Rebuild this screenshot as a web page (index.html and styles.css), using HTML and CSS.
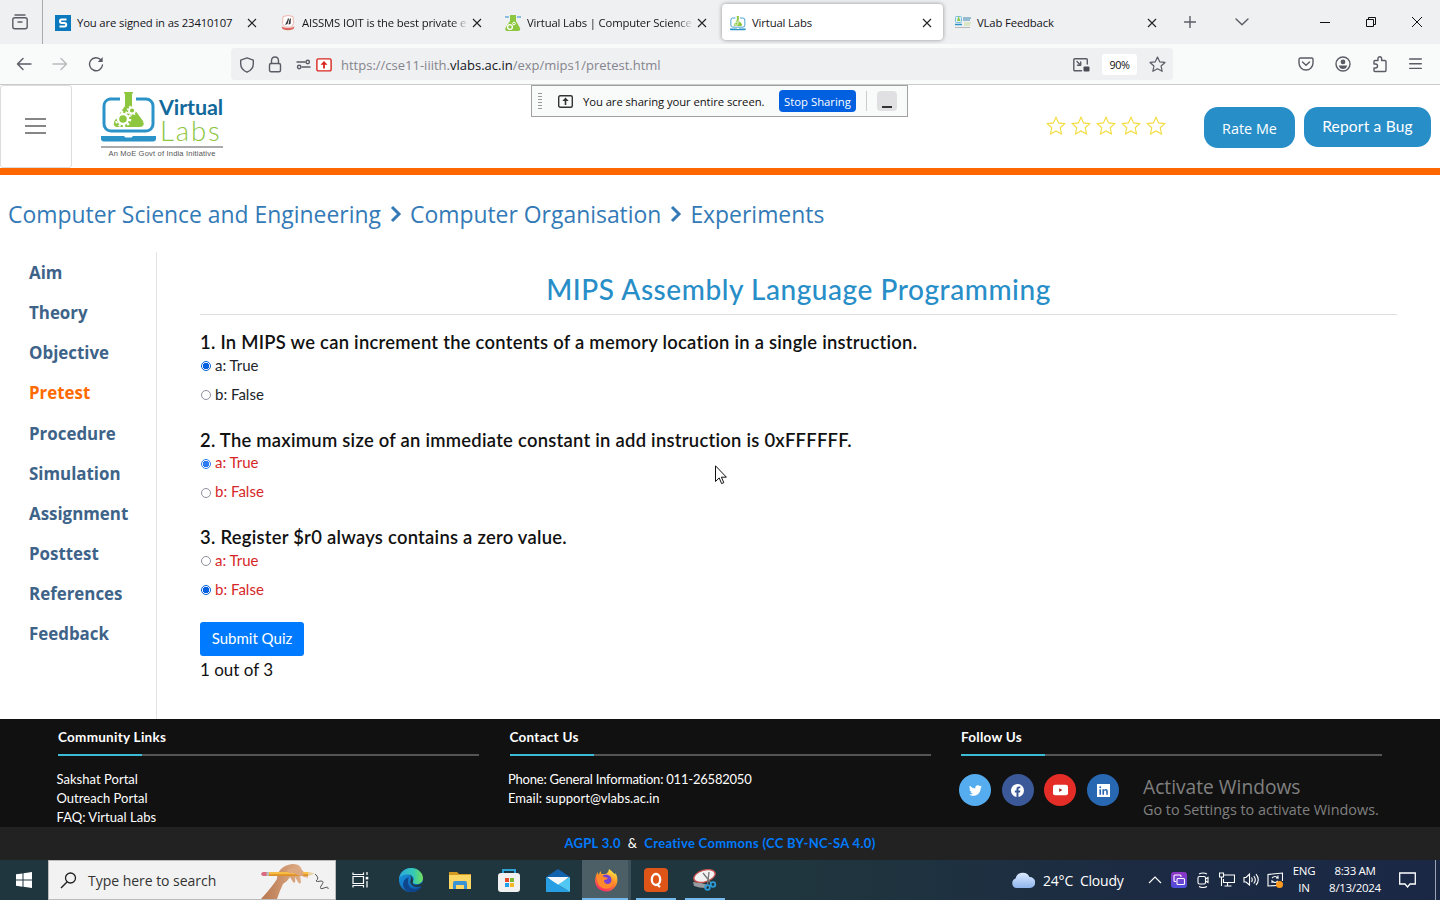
FILE: index.html
```html
<!DOCTYPE html>
<html lang="en">
<head>
<meta charset="utf-8">
<title>Virtual Labs</title>
<link rel="stylesheet" href="styles.css">
</head>
<body>
<svg class="defs" width="0" height="0">
  <defs>
    <linearGradient id="edgeBlue" x1="0" y1="0" x2="1" y2="1"><stop offset="0" stop-color="#1b9de2"/><stop offset="1" stop-color="#0c4fa5"/></linearGradient>
    <linearGradient id="edgeGreen" x1="0" y1="0" x2="1" y2="0"><stop offset="0" stop-color="#2ba9df"/><stop offset=".6" stop-color="#35c8b5"/><stop offset="1" stop-color="#72e05a"/></linearGradient>
    <linearGradient id="fox" x1=".8" y1="0" x2=".3" y2="1"><stop offset="0" stop-color="#fff04a"/><stop offset=".45" stop-color="#ff9125"/><stop offset="1" stop-color="#f5286a"/></linearGradient>
    <linearGradient id="violet" x1="0" y1="0" x2="0" y2="1"><stop offset="0" stop-color="#9334c6"/><stop offset="1" stop-color="#4c50dc"/></linearGradient>
    <linearGradient id="cloud" x1="0" y1="0" x2="0" y2="1"><stop offset="0" stop-color="#dcebff"/><stop offset="1" stop-color="#8fb4ec"/></linearGradient>
    <linearGradient id="skin" x1="0" y1="0" x2="1" y2="0"><stop offset="0" stop-color="#b87850"/><stop offset="1" stop-color="#e5b690"/></linearGradient>
    <symbol id="x" viewBox="0 0 10 10"><path d="M1 1l8 8M9 1l-8 8"/></symbol>
    <symbol id="star" viewBox="0 0 20 20"><path d="M10 1.200l2.600 5.700 6.200.7-4.600 4.200 1.300 6.200-5.500-3.100L4.500 18l1.300-6.200L1.200 7.600l6.200-.7z"/></symbol>
    <symbol id="vlab" viewBox="0 0 56 51">
      <path d="M19 8H9a7 7 0 0 0-6 7v18a7 7 0 0 0 7 7h35a7 7 0 0 0 7-7V15a7 7 0 0 0-7-7H35" fill="none" stroke="#2b93c8" stroke-width="3"/>
      <path d="M0 45h23l1.500 1.500h6L32 45h23v2.500a3 3 0 0 1-3 3H3a3 3 0 0 1-3-3z" fill="#2b93c8"/>
      <path d="M23 1h9v1.500h-1V15l11 15q2.500 6-4 6H17q-6 0-3.500-6L24 15V2.500h-1z" fill="#8dc63f"/>
      <circle cx="22" cy="28" r="5" fill="none" stroke="#fff" stroke-width="2.400"/>
      <circle cx="22" cy="28" r="7.200" fill="none" stroke="#fff" stroke-width="2.200" stroke-dasharray="2.260 2.260"/>
      <circle cx="31" cy="19.500" r="3" fill="none" stroke="#fff" stroke-width="1.800"/>
      <circle cx="31" cy="19.500" r="4.500" fill="none" stroke="#fff" stroke-width="1.400" stroke-dasharray="1.570 1.960"/>
    </symbol>
  </defs>
</svg>

<header class="tabs">
  <div class="view"><svg width="18" height="18" viewBox="0 0 18 18" class="ico"><path d="M4 2h10"/><rect x="1.800" y="4.800" width="14.400" height="11" rx="2"/><path d="M7 9h4"/></svg></div>
  <div class="tab"><svg class="fav" viewBox="0 0 16 16"><rect width="16" height="16" fill="#0a78bd"/><path d="M11.500 4.600H6.500q-1.500 0-1.500 1.700T6.500 8h3q1.700 0 1.700 1.700t-1.700 1.700h-5" fill="none" stroke="#fff" stroke-width="2"/></svg><span class="label">You are signed in as 23410107</span><svg class="close"><use href="#x"/></svg></div>
  <div class="tab"><svg class="fav" viewBox="0 0 16 16"><path d="M3 1.500L8 .500l5 1 .5 7-2 3.500h-7l-2-3.500z" fill="#fff" stroke="#f0b5b0"/><path d="M5 10l2.500-5 .5-2 1 1-1.500 5zM8.500 9.500l1-5 1.500-1.500-.5 6z" fill="#333"/><path d="M1.500 11.500q6.500 3 13 0l-1 2.500q-5.500 2.500-11 0z" fill="#df6761"/></svg><span class="label fade">AISSMS IOIT is the best private e</span><svg class="close"><use href="#x"/></svg></div>
  <div class="tab"><svg class="fav" viewBox="0 0 16 16"><path d="M0 2h4M12 2h4" stroke="#68add7" stroke-width="1.500"/><path d="M5 0h6v6l4 7q1 3-2 3H2q-3 0-1-4l4-6z" fill="#8dc63f"/><circle cx="5" cy="12" r="2.400" fill="none" stroke="#fff" stroke-width="1.300"/><circle cx="9" cy="8.500" r="1.300" fill="none" stroke="#fff"/></svg><span class="label fade">Virtual Labs | Computer Science</span><svg class="close"><use href="#x"/></svg></div>
  <div class="tab active"><svg class="fav"><use href="#vlab"/></svg><span class="label">Virtual Labs</span><svg class="close"><use href="#x"/></svg></div>
  <div class="tab"><svg class="fav" viewBox="0 0 16 16"><rect x=".5" y="1.500" width="6" height="6" rx="1" fill="#dff1fa" stroke="#77bddd"/><path d="M2 6l1.500-5 2 5z" fill="#8dc63f"/><path d="M0 9.500h7" stroke="#2b93c8" stroke-width="1.500"/><path d="M8 3h8M8 5h7" stroke="#3f86ae"/><path d="M9 8h7M9 10h6" stroke="#c3df9d"/><path d="M0 12.500h15" stroke="#aaa" stroke-width=".8"/></svg><span class="label">VLab Feedback</span><svg class="close"><use href="#x"/></svg></div>
  <svg class="ico plus" width="12" height="12" viewBox="0 0 12 12"><path d="M6 .5v11M.5 6h11"/></svg>
  <svg class="ico chev" width="14" height="8" viewBox="0 0 14 8"><path d="M1 1l6 5.800L13 1"/></svg>
  <svg class="win" viewBox="0 0 12 12"><path d="M1 6.500h10"/></svg>
  <svg class="win" viewBox="0 0 12 12"><path d="M1.500 3.500h7v7h-7zM3.500 3.500v-2h7v7h-2"/></svg>
  <svg class="win" viewBox="0 0 12 12"><path d="M1 1l10 10M11 1L1 11"/></svg>
</header>

<nav class="toolbar">
  <svg class="ico" width="16" height="14" viewBox="0 0 16 14"><path d="M15 7H1.500M7 1.500L1.500 7 7 12.500"/></svg>
  <svg class="ico dim" width="16" height="14" viewBox="0 0 16 14"><path d="M1 7h13.500M9 1.500L14.500 7 9 12.500"/></svg>
  <svg class="ico" width="16" height="16" viewBox="0 0 16 16"><path d="M13 4A6.500 6.500 0 1 0 14.500 9"/><path d="M14.700 1v5H9.700z" fill="#5b5b66" stroke="none"/></svg>
  <div class="urlbar">
    <svg class="ico" width="16" height="16" viewBox="0 0 16 16"><path d="M8 .9l6.300 2.300V7q0 5.500-6.300 8.200Q1.700 12.500 1.700 7V3.200z"/></svg>
    <svg class="ico lock" width="14" height="17" viewBox="0 0 14 17"><rect x="1.500" y="7.500" width="11" height="8.200" rx="1.500"/><path d="M3.500 7.500V5q0-4 3.500-4t3.500 4v2.500"/></svg>
    <svg class="ico perm" width="15" height="11" viewBox="0 0 15 11"><path d="M1 3h8M6 8h8"/><circle cx="11.700" cy="3" r="1.700"/><circle cx="3.200" cy="8" r="1.700"/></svg>
    <svg class="share" width="16" height="14" viewBox="0 0 16 14"><rect x=".9" y=".9" width="14.200" height="12" rx="1.500" fill="#fff" stroke="#d7261e" stroke-width="1.400"/><path d="M8 3l3.500 3.700H8.900v3.800H7.100V6.700H4.500z" fill="#d7261e"/></svg>
    <span class="url">https://cse11-iiith.<b>vlabs.ac.in</b>/exp/mips1/pretest.html</span>
    <svg class="ico pip" width="17" height="14" viewBox="0 0 17 14"><path d="M8.500 12.700H1.800a1 1 0 0 1-1-1V1.800a1 1 0 0 1 1-1h11.500a1 1 0 0 1 1 1V6M4 3.500l3.500 3.500M7.700 4v3.300H4.500"/><rect x="10.500" y="8.500" width="6" height="5" rx="1" fill="#4a4a55" stroke="none"/></svg>
    <span class="zoomed">90%</span>
    <svg class="ico" width="17" height="17"><use href="#star"/></svg>
  </div>
  <div class="actions">
    <svg class="ico" width="16" height="14" viewBox="0 0 16 14"><path d="M2.300 1h11.400a1.300 1.300 0 0 1 1.300 1.300V6a7 7 0 0 1-14 0V2.300A1.300 1.300 0 0 1 2.300 1zM4.500 5L8 8.300 11.500 5"/></svg>
    <svg class="ico" width="16" height="16" viewBox="0 0 16 16"><circle cx="8" cy="8" r="7"/><circle cx="8" cy="5.900" r="2.400" fill="#5b5b66" stroke="none"/><path d="M3.800 9.500h8.400q-.8 3.500-4.200 3.500t-4.200-3.500z" fill="#5b5b66" stroke="none"/></svg>
    <svg class="ico" width="16" height="18" viewBox="0 0 16 18"><path d="M2 8V6.500q0-1 1-1h3V3.500a1.800 1.800 0 0 1 3.600 0v2H13q1 0 1 1v9q0 1-1 1H3q-1 0-1-1V13h1.500a2 2 0 0 0 0-4H2z"/></svg>
    <svg class="ico" width="13" height="12" viewBox="0 0 13 12"><path d="M.7 1h11.600M.7 5.700h11.600M.7 10.400h11.600"/></svg>
  </div>
</nav>

<section class="masthead">
  <div class="burger"><i></i><i></i><i></i></div>
  <div class="logo">
    <div class="logo-main">
      <svg width="56" height="51"><use href="#vlab"/></svg>
      <div class="wordmark"><span class="virtual">Virtual</span><span class="labs">Labs</span></div>
    </div>
    <div class="initiative">An MoE Govt of India Initiative</div>
  </div>
  <div class="stars"><svg><use href="#star"/></svg><svg><use href="#star"/></svg><svg><use href="#star"/></svg><svg><use href="#star"/></svg><svg><use href="#star"/></svg></div>
  <a class="pill rate">Rate Me</a>
  <a class="pill bug">Report a Bug</a>
</section>

<div class="crumbs">
  <a>Computer Science and Engineering</a>
  <svg viewBox="0 0 12 18"><path d="M2 2l7 7-7 7"/></svg>
  <a>Computer Organisation</a>
  <svg viewBox="0 0 12 18"><path d="M2 2l7 7-7 7"/></svg>
  <a>Experiments</a>
</div>

<div class="body">
  <aside class="menu">
    <a>Aim</a><a>Theory</a><a>Objective</a><a class="on">Pretest</a><a>Procedure</a><a>Simulation</a><a>Assignment</a><a>Posttest</a><a>References</a><a>Feedback</a>
  </aside>
  <main class="quiz">
    <h1>MIPS Assembly Language Programming</h1>
    <section class="question">
      <h2>1. In MIPS we can increment the contents of a memory location in a single instruction.</h2>
      <label><i class="radio checked"></i><span>a: True</span></label>
      <label><i class="radio"></i><span>b: False</span></label>
    </section>
    <section class="question wrong">
      <h2>2. The maximum size of an immediate constant in add instruction is 0xFFFFFF.</h2>
      <label><i class="radio checked light"></i><span>a: True</span></label>
      <label><i class="radio"></i><span>b: False</span></label>
    </section>
    <section class="question wrong">
      <h2>3. Register $r0 always contains a zero value.</h2>
      <label><i class="radio"></i><span>a: True</span></label>
      <label><i class="radio checked"></i><span>b: False</span></label>
    </section>
    <button class="submit">Submit Quiz</button>
    <div class="score">1 out of 3</div>
  </main>
</div>

<footer class="footer">
  <div class="col">
    <h3>Community Links</h3>
    <p>Sakshat Portal</p><p>Outreach Portal</p><p>FAQ: Virtual Labs</p>
  </div>
  <div class="col">
    <h3>Contact Us</h3>
    <p class="phone">Phone: General Information: 011-26582050</p><p>Email: support@vlabs.ac.in</p>
  </div>
  <div class="col">
    <h3>Follow Us</h3>
    <div class="social">
      <a class="tw"><svg viewBox="0 0 24 24"><path d="M23.950 4.600a10 10 0 0 1-2.800.8 5 5 0 0 0 2.100-2.700 10 10 0 0 1-3.100 1.200 4.900 4.900 0 0 0-8.400 4.500A14 14 0 0 1 1.600 3.200a4.900 4.900 0 0 0 1.500 6.500 5 5 0 0 1-2.200-.6v.1a4.900 4.900 0 0 0 3.900 4.800 5 5 0 0 1-2.200.1 4.900 4.900 0 0 0 4.600 3.400A10 10 0 0 1 0 19.500a14 14 0 0 0 7.500 2.200c9.100 0 14.300-7.700 14-14.600a10 10 0 0 0 2.450-2.500z"/></svg></a>
      <a class="fb"><svg viewBox="0 0 24 24"><path d="M24 12a12 12 0 1 0-13.900 11.900v-8.400h-3V12h3V9.400c0-3 1.800-4.700 4.500-4.700 1.300 0 2.700.2 2.700.2v3h-1.500c-1.500 0-2 .9-2 1.900V12h3.400l-.5 3.500h-2.900v8.400A12 12 0 0 0 24 12z"/></svg></a>
      <a class="yt"><svg viewBox="0 0 28 22"><path d="M4 1h20q4 0 4 4v12q0 4-4 4H4q-4 0-4-4V5q0-4 4-4z"/><path d="M11.500 7.500l6 3.500-6 3.500z" fill="#a32420"/></svg></a>
      <a class="li"><svg viewBox="0 0 24 24"><path d="M0 0h24v24H0z"/><path d="M4.500 9.500h3V20h-3zM10 9.500h3V11q1-1.800 3.300-1.800 3.700 0 3.700 4.500V20h-3v-5.800q0-2.400-1.800-2.400-2.200 0-2.200 2.600V20h-3z" fill="#2867b2"/><circle cx="6" cy="6" r="1.800" fill="#2867b2"/></svg></a>
    </div>
  </div>
</footer>
<div class="license"><a>AGPL 3.0</a><span>&amp;</span><a>Creative Commons (CC BY-NC-SA 4.0)</a></div>

<div class="taskbar">
  <div class="start"><svg width="16" height="16" viewBox="0 0 16 16"><path d="M0 2.300L6.500 1.400V7.500H0zM7.500 1.200L16 0v7.500H7.500zM0 8.500h6.500v6.200L0 13.800zM7.500 8.500H16V16l-8.500-1.200z" fill="#fff"/></svg></div>
  <div class="search">
    <svg width="17" height="17" viewBox="0 0 17 17"><circle cx="10.500" cy="6" r="5" fill="none" stroke="#222" stroke-width="1.300"/><path d="M7 10L1 16" stroke="#222" stroke-width="1.500"/></svg>
    <span>Type here to search</span>
    <svg class="hand" width="71" height="36" viewBox="0 0 71 36">
      <path d="M1 36Q12 24 17 16q0-6 4-10 4-4 11-5 8-1 10 6l6 6q1 3-4 1l-4-2 1 7q-1 3-3 0l-3-5q1 8-2 5l-3-5q-3 5-7 7-3 6-6 15z" fill="url(#skin)"/>
      <path d="M4 9h44l5 1.500-5 2.500H4z" fill="#f8bd45"/><path d="M5 11.300h43V13H5z" fill="#dd9026"/><path d="M3 9h4v4H3q-4-2 0-4z" fill="#d9697e"/><path d="M6.500 9H9v4H6.500z" fill="#bbb"/><path d="M48 9l7 1.500-7 2.500z" fill="#e9d1a4"/>
      <path d="M27 7q9-4 13 0l4 4q-2 4-6 1l-5-2q-5 1-6-3z" fill="#dca67f"/>
      <path d="M55 11q5 4 1 7 1 1 5 0 4 0 0 5-2 4 3 2 5-2 4 1" fill="none" stroke="#555"/>
    </svg>
  </div>
  <div class="app view-tasks"><svg width="17" height="16" viewBox="0 0 17 16" fill="none" stroke="#fff" stroke-width="1.200"><path d="M1 4.500h10.500v7H1zM1 .5v2h10.500v-2M1 15.500v-2h10.500v2M15 0v3M15 9v6.500"/><path d="M13.700 4.800h2.600v2.600h-2.600z" fill="#fff" stroke="none"/></svg></div>
  <div class="app"><svg width="24" height="24" viewBox="0 0 24 24"><circle cx="12" cy="12" r="12" fill="url(#edgeBlue)"/><path d="M0 11C1 4 6 0 12 0c7 0 12 5 12 10 0 4-3 6-6 6-3.500 0-4.500-1.500-4-2.500 2-3 0-7-4.500-7C4 6.500 1 8 0 11z" fill="url(#edgeGreen)"/><path d="M9 13q-.5 7 7 8 4 0 7-3-3 6-11 6-7-1-8-7 0-6 6-8-1 1-1 4z" fill="#0f458d"/><path d="M14 13.500q-1.500 2.500 2 3.500 4 1 8-3l-1 4q-6 2-9 0-4-3-2-7 1-2-2-4 4 1 4 6.500z" fill="#20363e"/></svg></div>
  <div class="app"><svg width="22" height="19" viewBox="0 0 22 19"><path d="M0 1h8l2 2h12v15H0z" fill="#d39a22"/><path d="M0 4h22v14H0z" fill="#fbd866"/><path d="M4 18v-6q0-2 2-2h10q2 0 2 2v6h-3v-4H7v4z" fill="#3a93d5"/></svg></div>
  <div class="app"><svg width="24" height="24" viewBox="0 0 24 24"><path d="M6 7V2h12v5" fill="none" stroke="#2ba1d8" stroke-width="2"/><rect x="1" y="5" width="22" height="19" rx="3" fill="#f1f1f1"/><path d="M8 10h4v4H8z" fill="#e64a27"/><path d="M13 10h4v4h-4z" fill="#80b631"/><path d="M8 15h4v4H8z" fill="#20a0e8"/><path d="M13 15h4v4h-4z" fill="#f5b824"/></svg></div>
  <div class="app"><svg width="24" height="23" viewBox="0 0 24 23"><path d="M0 8l12-8 12 8-12 10z" fill="#1262ad"/><path d="M1 8h22L12 17z" fill="#f5f8fa"/><path d="M0 8l24 15H0z" fill="#289fe2"/><path d="M24 8v15L12 15.500z" fill="#51c8f4"/></svg></div>
  <div class="app firefox"><svg width="24" height="24" viewBox="0 0 24 24"><path d="M15 1q5 4 6 5.500l.7-1.500Q25 12 22 17.500 18 24 11.500 23.500 4 23 1.500 16 0 10 3.500 4l1 3 2-4 1 3h4q3-1 3.500-5z" fill="url(#fox)"/><circle cx="12" cy="12" r="5.500" fill="#7442d5"/><path d="M3 8q5-2 7 1l4 1q-1 2-4 2 0 4 4 4 5-1 3.500-7 4 8-2 11-6 2-10-2-3-4-2.500-10z" fill="#ff8a2c"/></svg></div>
  <div class="app open"><svg width="24" height="24" viewBox="0 0 24 24"><rect width="24" height="24" rx="4" fill="#df5517"/><ellipse cx="12" cy="11.500" rx="4.200" ry="5.500" fill="none" stroke="#fff" stroke-width="2.300"/><path d="M12.500 16l3.500 3" stroke="#fff" stroke-width="2.200"/></svg></div>
  <div class="app open"><svg width="25" height="24" viewBox="0 0 25 24"><path d="M1 14l8 1 7 2-2 3Q7 20 2 18z" fill="#989da1"/><ellipse cx="12.500" cy="8" rx="11" ry="5.800" transform="rotate(-17 12.500 8)" fill="#f2f2f2" stroke="#c9524f" stroke-width="1.300"/><path d="M11 5l8 10M17 4l-1.500 13" stroke="#777" stroke-width="1.300"/><circle cx="15.500" cy="19.500" r="2.300" fill="none" stroke="#2d9bd9" stroke-width="1.800"/><circle cx="21" cy="16.500" r="2.300" fill="none" stroke="#2d9bd9" stroke-width="1.800"/></svg></div>
  <div class="tray">
    <svg width="24" height="16" viewBox="0 0 24 16"><path d="M5 16a5 5 0 0 1-.5-9.500A7.500 7.500 0 0 1 18.500 5 5.500 5.500 0 0 1 19 16z" fill="url(#cloud)"/></svg>
    <span class="weather">24°C&nbsp; Cloudy</span>
    <svg class="t" viewBox="0 0 16 16"><path d="M2 11l6-6 6 6"/></svg>
    <svg class="t" viewBox="0 0 16 16"><rect width="16" height="16" rx="3" fill="url(#violet)" stroke="none"/><path d="M5 9.500H4q-1 0-1-1V4q0-1 1-1h5q1 0 1 1v1"/><rect x="6" y="6.500" width="7.500" height="6" rx="1"/></svg>
    <svg class="t" viewBox="0 0 16 16"><rect x="3" y="4.500" width="7.500" height="7.500" rx="1.500"/><path d="M10.500 7L13 5.500v5L10.500 9M4 2q4-2 8 0M4 14.500q4 2 8 0"/></svg>
    <svg class="t" viewBox="0 0 16 16"><path d="M5 3h10.500v7.500H4.500V7M8.500 10.500v3M5.500 14h7M.5 1h4v4h-4zM2.500 5v9"/></svg>
    <svg class="t" viewBox="0 0 16 16"><path d="M1 5.500h2L6.500 2v11L3 10H1zM8.500 5.500q1.500 2.500 0 4.500M10.800 4q3 4 0 7.500M13 2.200q4.500 5.500 0 11"/></svg>
    <svg class="t" viewBox="0 0 16 16"><path d="M10 13.500L1 14V2.500L15.500 1v8M5 6q3-3 6 0V3.500M11 6H9M11 9q-3 3-6 0v2"/><circle cx="12.500" cy="12.500" r="3.500" fill="#ff9a1f" stroke="none"/></svg>
    <span class="lang">ENG<br>IN</span>
    <span class="clock">8:33 AM<br>8/13/2024</span>
    <svg width="17" height="16" viewBox="0 0 17 16"><path d="M.7 1h15.600v11H11l-2.500 3L6 12H.7z" fill="none" stroke="#fff" stroke-width="1.300"/></svg>
    <i class="peek"></i>
  </div>
</div>

<div class="sharing">
  <svg class="grip" width="4" height="17" viewBox="0 0 4 17"><path d="M2 0v17" stroke="#999" stroke-width="4" stroke-dasharray="1 2"/></svg>
  <svg class="ico" width="15" height="13" viewBox="0 0 15 13"><rect x=".7" y=".7" width="13.600" height="11.600" rx="1.500"/><path d="M7.500 2.500l3.200 3.500H8.300v4H6.700V6H4.300z" fill="#333" stroke="none"/></svg>
  <span class="msg">You are sharing your entire screen.</span>
  <button class="stop">Stop Sharing</button>
  <i class="rule"></i>
  <i class="mini"></i>
</div>
<div class="activate"><div class="act1">Activate Windows</div><div class="act2">Go to Settings to activate Windows.</div></div>
<svg class="cursor" width="12" height="20" viewBox="0 0 12 20"><path d="M.5.800v15.700l3.700-3.600 2.400 5.700 2.200-1-2.400-5.400h5z" fill="#fff" stroke="#111"/></svg>
</body>
</html>
```
FILE: styles.css
```css
* { box-sizing: border-box; }
body { margin: 0; width: 1440px; height: 900px; overflow: hidden; display: flex; flex-direction: column; background: #fff; color: #111; font-family: "Open Sans", sans-serif; position: relative; }
h1, h2, h3, p { margin: 0; }
svg { flex: none; display: block; }
.defs { position: absolute; }
i { display: block; flex: none; }
a, span, h2, p { white-space: nowrap; }
.ico { fill: none; stroke: #5b5b66; stroke-width: 1.4; stroke-linejoin: round; stroke-linecap: round; }
.dim { opacity: .4; }

/* Browser tabs */
.tabs { height: 44px; flex: none; background: #eff0f2; display: flex; align-items: center; }
.view { width: 43px; height: 44px; flex: none; border-right: 1px solid #aaaab2; display: flex; align-items: center; padding-left: 11px; margin-right: 4px; }
.tab { width: 221px; height: 36px; margin-right: 4px; flex: none; display: flex; align-items: center; padding: 1px 11px 0 8px; border-radius: 4px; }
.tab.active { background: #fff; box-shadow: 0 0 4px rgba(0,0,0,.4); }
.fav { width: 16px; height: 16px; margin-right: 6px; }
.label { flex: 1; min-width: 0; font-size: 11.3px; letter-spacing: -.15px; line-height: 18px; color: #15141a; }
.fade { -webkit-mask-image: linear-gradient(90deg, #000 88%, transparent 98%); mask-image: linear-gradient(90deg, #000 88%, transparent 98%); }
.close { width: 10px; height: 10px; stroke: #222; stroke-width: 1.1; }
.plus { margin-left: 12px; }
.chev { margin-left: 39px; margin-right: 70px; }
.win { width: 12px; height: 12px; fill: none; stroke: #111; stroke-width: 1; margin-right: 34px; }
.win:last-child { margin-right: 0; }

/* Navigation bar */
.toolbar { height: 41px; flex: none; background: #f9fafa; border-bottom: 1px solid #cacaca; display: flex; align-items: center; padding-left: 16px; gap: 20px; }
.urlbar { width: 942px; height: 32px; margin-left: 107px; background: #eff0f2; border-radius: 4px; display: flex; align-items: center; padding: 1px 7px 0 8px; }
.lock { margin-left: 13px; }
.perm { margin: 0 5px 0 14px; }
.url { margin-left: 9px; flex: 1; font-size: 13px; color: #85858d; padding-top: 1px; }
.url b { font-weight: 400; color: #15141a; }
.zoomed { width: 35px; height: 21px; margin: 0 12px; background: #fff; border-radius: 3px; text-align: center; font-size: 10.8px; line-height: 21px; letter-spacing: -.4px; }
.actions { flex: 1; display: flex; justify-content: flex-end; align-items: center; gap: 21px; padding-right: 18px; }

/* Site header */
.masthead { height: 90px; flex: none; border-bottom: 7px solid #ff6700; display: flex; align-items: flex-start; }
.burger { width: 72px; height: 83px; border: 1px solid #ddd; border-radius: 3px; padding: 32px 0 0 24px; display: flex; flex-direction: column; gap: 5px; }
.burger i { width: 21px; height: 2px; background: #868686; }
.logo { width: 123px; margin: 6px 0 0 29px; }
.logo-main { display: flex; height: 51px; }
.wordmark { display: flex; flex-direction: column; font-family: Lato, sans-serif; }
.virtual { margin: 5px 0 0 2px; font-size: 21.500px; line-height: 22px; font-weight: 700; color: #13699b; letter-spacing: -.1px; }
.labs { margin-left: 3px; font-weight: 300; font-size: 27.500px; line-height: 24px; padding-top: 1px; color: #8dc63f; letter-spacing: 1.900px; }
.initiative { border-top: 2px solid #aaa; width: 122px; margin-top: 4px; padding-top: 1px; text-align: center; font: 7.500px/9px "Liberation Sans", sans-serif; letter-spacing: .2px; color: #555; white-space: nowrap; }
.stars { display: flex; gap: 5px; margin: 31px 38px 0 auto; }
.stars svg { width: 20px; height: 20px; fill: none; stroke: #f3dc3c; stroke-width: 1.1; }
.pill { background: #288ec8; color: #fff; border-radius: 14px; text-align: center; margin-top: 22px; margin-right: 9px; }
.rate { width: 91px; height: 41px; font-size: 14.4px; line-height: 43px; }
.bug { width: 127px; height: 40px; font-family: Lato, sans-serif; font-size: 15.500px; line-height: 39px; letter-spacing: .2px; }

.crumbs { height: 77px; flex: none; display: flex; align-items: center; padding: 1px 0 0 8px; font-size: 22.910px; color: #337ab7; }
.crumbs svg { width: 12px; height: 18px; margin: 0 8px 0 9px; fill: none; stroke: #337ab7; stroke-width: 3; }

/* Page body */
.body { height: 467px; flex: none; display: flex; }
.menu { width: 157px; border-right: 1px solid #e3e3e3; display: flex; flex-direction: column; padding-left: 29px; }
.menu a { height: 40.150px; line-height: 41px; font-size: 16.900px; font-weight: 700; color: #3e6389; }
.menu a.on { color: #ff6a00; }
.quiz { width: 1197px; margin-left: 43px; font-family: Lato, sans-serif; }
.quiz h1 { height: 63px; line-height: 74px; text-align: center; font-size: 28px; font-weight: 500; color: #288ec8; border-bottom: 1px solid #e0e0e0; letter-spacing: .550px; margin-bottom: 15px; }
.question { height: 97.500px; }
.question h2 { height: 21px; line-height: 24px; font-size: 18.400px; font-weight: 600; color: #111; letter-spacing: .260px; }
.question label { height: 29px; display: flex; align-items: center; gap: 4px; font-size: 15px; color: #212529; }
.question label span { margin-top: -1px; }
.wrong label { color: #d62728; }
.wrong .radio { margin-top: 1px; }
.wrong label span { margin-top: -2px; }
.radio { width: 10px; height: 10px; margin-left: 1px; border: 1px solid #8f8f9d; border-radius: 50%; background: #fff; }
.radio.checked { border: 1px solid #0060df; background: radial-gradient(circle, #0060df 3px, #fff 3.500px); }
.radio.light { border-color: #2b7af0; background: radial-gradient(circle, #2b7af0 3px, #fff 3.500px); }
.submit { display: block; width: 104px; height: 34px; margin-top: -1px; border: 0; padding: 0 0 2px; border-radius: 3px; background: #007bff; color: #fff; font: 15px Lato, sans-serif; }
.score { font-size: 17px; line-height: 27px; }

/* Footer */
.footer { height: 108px; flex: none; background: #111; color: #fff; display: flex; gap: 30.500px; padding-left: 58px; font-family: Lato, sans-serif; }
.col { width: 421px; }
.col h3 { height: 37px; line-height: 36px; font-size: 13.500px; font-weight: 700; letter-spacing: .270px; border-bottom: 2px solid; border-image: linear-gradient(90deg, #3bbcd4 20%, #555 20%) 1; margin-bottom: 14px; }
.col p { margin-left: -1.500px; font-size: 13px; line-height: 19px; letter-spacing: .03px; }
.col .phone { letter-spacing: -.21px; }
.social { display: flex; gap: 10.700px; margin: 18px 0 0 -2px; }
.social a { width: 32px; height: 32px; border-radius: 50%; display: flex; align-items: center; justify-content: center; }
.social svg { width: 13px; height: 13px; fill: #fff; }
.social .yt svg { width: 15px; height: 12px; }
.tw { background: #55acee; }
.fb { background: #3b5998; }
.yt { background: #e52d27; }
.li { background: #2867b2; }
.license { height: 33px; flex: none; background: #222; color: #fff; display: flex; align-items: center; justify-content: center; gap: 7px; padding-bottom: 1px; font: 700 13px Lato, sans-serif; letter-spacing: .3px; }
.license a { color: #007bff; }
.license span { font-weight: 400; }

/* Windows taskbar */
.taskbar { height: 40px; flex: none; display: flex; color: #fff; background: linear-gradient(90deg, #20363e 0%, #20363e 55%, #1c2b42 78%, #1a2846 100%); }
.start { width: 48px; display: flex; align-items: center; justify-content: center; }
.search { width: 288px; background: #f2f2f2; border: 1px solid #bbb; display: flex; align-items: center; padding-left: 11px; color: #333; font-size: 14px; overflow: hidden; }
.search span { margin-left: 11px; flex: 1; letter-spacing: -.03px; }
.hand { margin-right: 4px; align-self: flex-end; }
.app { width: 49px; display: flex; align-items: center; justify-content: center; position: relative; }
.view-tasks { width: 50px; padding-right: 2px; }
.firefox { background: #4c5e66; border-right: 3px solid #3b5058; box-shadow: inset 0 -2px #76b9ed; padding-left: 2px; }
.open::after { content: ""; position: absolute; left: 5px; right: 4px; bottom: 0; height: 2px; background: #76b9ed; }
.tray { margin-left: auto; display: flex; align-items: center; width: 429px; flex: none; }
.weather { font-size: 14px; margin: 0 21px 0 8px; width: 83px; letter-spacing: -.2px; }
.t { width: 16px; height: 16px; margin-right: 8px; fill: none; stroke: #fff; stroke-width: 1.1; }
.lang, .clock { font-size: 11.500px; line-height: 17.500px; text-align: center; letter-spacing: -.3px; padding-bottom: 2px; }
.lang { width: 26px; }
.clock { width: 56px; margin: 0 16px 0 10px; }
.peek { width: 1px; height: 40px; margin-left: 19px; background: #9aa3b0; }

/* Overlays */
.sharing { position: absolute; left: 531px; top: 85px; width: 377px; height: 32px; background: #f9fafa; border: 1px solid #a0a0a0; display: flex; align-items: center; padding-left: 6px; }
.grip { margin-right: 16px; }
.sharing .ico { stroke: #333; }
.msg { width: 196px; flex: none; padding-left: 10px; font-size: 11.300px; letter-spacing: -.08px; }
.msg + .stop { margin-left: 10px; }
.stop { width: 77px; height: 22px; flex: none; border: 0; padding: 0; border-radius: 4px; background: #0060df; color: #fff; font: 11.300px "Open Sans", sans-serif; white-space: nowrap; }
.rule { width: 1px; height: 20px; background: #ccc; margin: 0 10px; }
.mini { width: 20px; height: 20px; border-radius: 4px; background: #e0e0e2; padding: 15px 5px 0; }
.mini::before { content: ""; display: block; height: 2px; background: #333; }
.activate { position: absolute; left: 1143px; top: 774px; color: #808080; white-space: nowrap; }
.act1 { font-size: 19.200px; line-height: 26px; }
.act2 { font-size: 14.400px; line-height: 20px; }
.cursor { position: absolute; left: 715px; top: 465px; }
```
